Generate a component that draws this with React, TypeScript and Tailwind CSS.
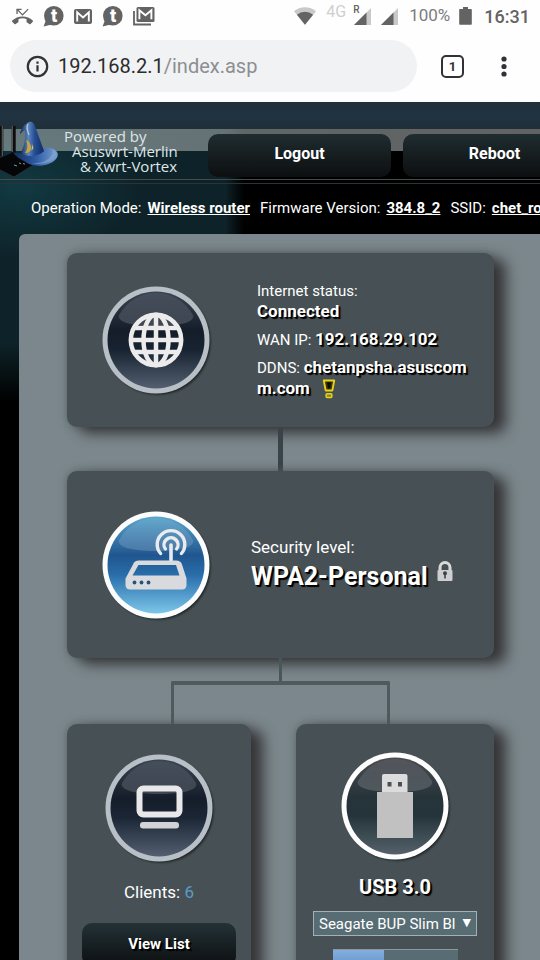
import React, { useState } from 'react';
import { MdPhoneMissed } from 'react-icons/md';

const GmailIcon: React.FC = () => (
  <svg width="18" height="15" viewBox="0 0 18 15">
    <rect width="18" height="15" rx="2" fill="#636363" />
    <path d="M3.2 12.5V3.4L9 8.4l5.8-5v9.1" fill="none" stroke="#fff" strokeWidth="1.9" />
  </svg>
);

const GmailStackIcon: React.FC = () => (
  <svg width="22" height="19" viewBox="0 0 22 19">
    <path d="M1 4v13.5h17" fill="none" stroke="#636363" strokeWidth="1.8" />
    <rect x="3.5" width="18" height="15" rx="1.5" fill="#636363" />
    <path d="M6.4 12.3V3.2l6 5 6-5v9.1" fill="none" stroke="#fff" strokeWidth="1.9" />
  </svg>
);

const ChatIcon: React.FC = () => (
  <svg width="21" height="21" viewBox="0 0 21 21">
    <circle cx="10.8" cy="9.8" r="9.8" fill="#636363" />
    <path d="M3 14L.6 20.4l7-1.6z" fill="#636363" />
    <text x="11" y="16" textAnchor="middle" fontFamily="Roboto, sans-serif" fontWeight="900" fontSize="18" fill="#fff">
      t
    </text>
  </svg>
);

const SignalIcon: React.FC = () => (
  <svg width="17" height="17" viewBox="0 0 17 17">
    <path d="M17 0v17H0z" fill="#c9c9c9" />
    <path d="M12.5 4.5V17H0z" fill="#636363" />
  </svg>
);

const StatusBar: React.FC = () => (
  <div className="flex h-8 items-center justify-between pr-[10px] pl-3">
    <div className="flex items-center gap-[10px]">
      <MdPhoneMissed className="size-[21px] text-[#636363]" />
      <ChatIcon />
      <GmailIcon />
      <ChatIcon />
      <GmailStackIcon />
    </div>
    <div className="flex items-center text-[#636363]">
      <svg className="mr-[10px]" width="22" height="18" viewBox="0 0 24 19">
        <path d="M12 19L0 4.2a19 19 0 0 1 24 0z" fill="#c9c9c9" />
        <path d="M12 19L3.2 8.1a14 14 0 0 1 17.600 0z" fill="#636363" />
      </svg>
      <span className="mr-2 mb-2 text-[16px] leading-4 text-[#cfcfcf]">4G</span>
      <span className="relative mr-[10px]">
        <SignalIcon />
        <span className="absolute -top-[3px] -left-px text-[10px] leading-[10px] font-medium">R</span>
      </span>
      <SignalIcon />
      <span className="ml-[11px] text-[17px] text-[#7c7c7c]">100%</span>
      <svg className="ml-[9px]" width="13" height="18" viewBox="0 0 13 18">
        <path d="M4 0h5v2h3a.8.8 0 0 1 .8.8V17a.8.8 0 0 1-.8.8H1a.8.8 0 0 1-.8-.8V2.800A.8.8 0 0 1 1 2h3z" fill="#636363" />
      </svg>
      <span className="ml-3 text-[18px] font-medium">16:31</span>
    </div>
  </div>
);

const AddressBar: React.FC = () => (
  <div className="flex h-[70px] items-start pt-2 pr-[25px] pl-[10px]">
    <div className="flex h-[52px] flex-1 items-center gap-[9px] rounded-full bg-[#f1f2f4] pl-4">
      <svg width="23" height="23" viewBox="0 0 23 23">
        <circle cx="11.500" cy="11.500" r="9.700" fill="none" stroke="#303235" strokeWidth="2.200" />
        <path d="M10.400 10.300h2.200v6.200h-2.200zM10.400 6.500h2.200v2.200h-2.200z" fill="#303235" />
      </svg>
      <span className="text-[20px] text-[#2b2c2e]">
        192.168.2.1<span className="text-[#8c8e91]">/index.asp</span>
      </span>
    </div>
    <button
      aria-label="Tabs"
      className="mt-[15px] ml-6 flex size-[23px] items-center justify-center rounded-[5px] border-2 border-[#303235] text-[13px] font-bold text-[#303235]"
    >
      1
    </button>
    <button aria-label="Menu" className="mt-[15px] ml-[29px] flex w-[22px] justify-center">
      <svg width="6" height="23" viewBox="0 0 6 23" fill="#303235">
        <circle cx="3" cy="4" r="2.600" />
        <circle cx="3" cy="11.500" r="2.600" />
        <circle cx="3" cy="19" r="2.600" />
      </svg>
    </button>
  </div>
);

const Logo: React.FC = () => (
  <svg width="60" height="60" viewBox="0 0 60 60" className="shrink-0">
    <defs>
      <linearGradient id="hat" x1="0" x2="1">
        <stop offset="0" stopColor="#14264f" />
        <stop offset=".35" stopColor="#5c86bd" />
        <stop offset=".6" stopColor="#274f93" />
        <stop offset="1" stopColor="#0e2a63" />
      </linearGradient>
      <linearGradient id="brim" x1="0" x2="1">
        <stop offset="0" stopColor="#152c5e" />
        <stop offset=".5" stopColor="#2c5aa3" />
        <stop offset="1" stopColor="#7ba1d0" />
      </linearGradient>
    </defs>
    <path d="M1.300 6v30M13.700 6v28" stroke="#0b0d0f" strokeWidth="4" />
    <path d="M2.300 6v30M12.300 6v26" stroke="#6f6663" strokeWidth="1" />
    <path d="M0 38l14-6 21 12-21 13L0 50z" fill="#050607" />
    <path d="M0 50l14 7 21-13" fill="none" stroke="#2b3034" strokeWidth="1" />
    <path d="M14 45l3 1M19 43l2 .6M23 43.500l2 .6" stroke="#7e95a0" strokeWidth="1" />
    <path d="M13 32c8 3 14 1 20 0s11-5 18-4c6 2 9 6 5 11-6 7-20 9-29 4-6-4-12-6-14-11z" fill="url(#brim)" />
    <path d="M52 29c6 3 5 8-1 12-6 3-14 4-20 2 9 1 16-2 19-6 3-3 3-5 2-8z" fill="#86a9d6" opacity=".6" />
    <path d="M20 14c1-6 5-10 9-12 3-.7 5 1 6 4l9 25c-4 5-16 7-23 2 3-7 5-14 4-22-1-1-2 0-5 3z" fill="url(#hat)" />
    <path d="M28 4c-2 3-1 6 1 11" stroke="#a9c2e3" strokeWidth="1.300" fill="none" />
    <path d="M26 20c3 1 5 4 5 8s-3 5-6 5c3-4 3-8 1-13z" fill="#c9a53c" />
    <path d="M32 24l1.500 4-2 3z" fill="#d8bd62" />
  </svg>
);

const NavButton: React.FC<{ label: string }> = ({ label }) => (
  <button className="h-[43px] w-[183px] shrink-0 rounded-[10px] bg-linear-to-b from-[#1f2d31] to-[#0d0f10] pb-1 text-[16px] font-bold text-white">
    {label}
  </button>
);

const Header: React.FC = () => (
  <header>
    <div className="h-[27px] bg-linear-to-b from-[#22303b] via-[#203341] to-[#203039]" />
    <div className="flex h-[51px] gap-3 border-b border-[#454b4d] bg-[linear-gradient(90deg,#a3b3b394,#8e8e90b0)] bg-[length:100%_22px] bg-no-repeat">
      <div className="flex w-[196px] shrink-0">
        <div className="-mt-[9px]">
          <Logo />
        </div>
        <div className="pl-1 font-['Open_Sans',sans-serif] text-[15px] leading-[15px] text-[#dfe6e8]">
          <p>Powered by</p>
          <p className="pl-2">Asuswrt-Merlin</p>
          <p className="pl-4">&amp; Xwrt-Vortex</p>
        </div>
      </div>
      <div className="flex gap-3 pt-[5px]">
        <NavButton label="Logout" />
        <NavButton label="Reboot" />
      </div>
    </div>
    <div className="h-1 border-b border-[#2c3335]" />
    <div className="flex h-[50px] gap-[10px] overflow-hidden pt-[14px] pl-[31px] text-[15px] leading-5 whitespace-nowrap text-white">
      <span>
        Operation Mode:<a href="#mode" className="ml-[6px] font-bold underline">Wireless router</a>
      </span>
      <span>
        Firmware Version:<a href="#firmware" className="ml-[6px] font-bold underline">384.8_2</a>
      </span>
      <span>
        SSID:<a href="#ssid" className="ml-[6px] font-bold underline">chet_router</a>
      </span>
    </div>
  </header>
);

interface OrbProps {
  id: string;
  ring: string;
  stops: [string, string, string, string];
  children: React.ReactNode;
}

// Glossy round badge behind every node icon
const Orb: React.FC<OrbProps> = ({ id, ring, stops, children }) => (
  <svg width="108" height="108" viewBox="0 0 108 108" className="shrink-0 overflow-visible">
    <defs>
      <linearGradient id={`${id}-fill`} x1="0" y1="0" x2="0" y2="1">
        <stop offset="0" stopColor={stops[0]} />
        <stop offset=".4" stopColor={stops[1]} />
        <stop offset=".6" stopColor={stops[2]} />
        <stop offset="1" stopColor={stops[3]} />
      </linearGradient>
      <linearGradient id={`${id}-gloss`} x1="0" y1="0" x2="0" y2="1">
        <stop offset="0" stopColor="#fff" stopOpacity=".06" />
        <stop offset="1" stopColor="#fff" stopOpacity=".17" />
      </linearGradient>
      <filter id={`${id}-blur`}>
        <feGaussianBlur stdDeviation="1.200" />
      </filter>
    </defs>
    <circle cx="56" cy="56" r="52.500" fill="#1b2124" filter={`url(#${id}-blur)`} />
    <circle cx="54" cy="54" r="53.500" fill={ring} />
    <circle cx="54" cy="54" r="48.500" fill={`url(#${id}-fill)`} />
    <path d="M17 29C26 14 39 7 54 7s28 7 37 22c2 7-12 11-37 11S15 36 17 29z" fill={`url(#${id}-gloss)`} />
    {children}
  </svg>
);

const GlobeOrb: React.FC = () => (
  <Orb id="globe" ring="#b9bfc6" stops={['#3a4452', '#141d29', '#182331', '#535e70']}>
    <g fill="none" stroke="#ececec" strokeWidth="4.500">
      <circle cx="54" cy="54" r="25.200" />
      <ellipse cx="54" cy="54" rx="12.500" ry="25.200" />
      <path d="M54 28v52M28 54h52M32 42h44M32 66h44" />
    </g>
  </Orb>
);

const RouterOrb: React.FC = () => (
  <Orb id="router" ring="#fbfcfd" stops={['#5ba5cc', '#20568f', '#286daa', '#7cc6ea']}>
    <g fill="none" stroke="#e9ecef" strokeLinecap="round">
      <path d="M69 34v18" strokeWidth="3.600" />
      <path d="M63.400 38a7 7 0 1 1 11.200 0" strokeWidth="3.400" />
      <path d="M58.600 42.500a13.800 13.800 0 1 1 20.800 0" strokeWidth="3.400" />
    </g>
    <path
      fillRule="evenodd"
      fill="#d9dadd"
      d="M37 49.500h37c3 0 5 1 6 4l4.500 14V74c0 3-2 4.500-4 4.500H28c-3 0-4.500-2-4.500-4.500v-6.500L31 53.500c1-3 3-4 6-4zM36.500 54L30.500 64.500H77.500L74 54z"
    />
    <g fill="#22547f">
      <circle cx="32.500" cy="71.500" r="1.900" />
      <circle cx="39.500" cy="71.500" r="1.900" />
      <circle cx="46.500" cy="71.500" r="1.900" />
    </g>
  </Orb>
);

const ClientOrb: React.FC = () => (
  <Orb id="client" ring="#b9bfc6" stops={['#3a4452', '#141d29', '#1b2635', '#535e70']}>
    <rect x="34.500" y="34.500" width="40" height="26" rx="4" fill="none" stroke="#e8e8ea" strokeWidth="6" />
    <rect x="35" y="68" width="39" height="6.500" rx="3" fill="#d3d3d5" />
  </Orb>
);

const UsbOrb: React.FC = () => (
  <Orb id="usb" ring="#fdfdfd" stops={['#494b51', '#26343a', '#25343b', '#54616a']}>
    <path d="M41 24a2 2 0 0 1 2-2h21.500a2 2 0 0 1 2 2v17H41z" fill="#dcdcdc" />
    <rect x="46.500" y="30" width="4" height="4.500" fill="#4b5054" />
    <rect x="57" y="30" width="4" height="4.500" fill="#4b5054" />
    <rect x="36" y="40" width="36" height="46" fill="#c1c1c1" />
  </Orb>
);

const LockIcon: React.FC = () => (
  <svg width="18" height="21" viewBox="0 0 18 21" className="mt-[2px]">
    <path d="M4 10V6.500a5 5 0 0 1 10 0V10" fill="none" stroke="#d9d9d9" strokeWidth="3" />
    <rect x="1.500" y="9" width="15" height="11" rx="1" fill="#cdcecf" />
    <circle cx="9" cy="12.300" r="2" fill="#3e4447" />
    <rect x="8.200" y="13" width="1.600" height="4.500" fill="#3e4447" />
  </svg>
);

const AlertIcon: React.FC = () => (
  <svg width="14" height="20" viewBox="0 0 14 21" className="ml-3 inline-block align-bottom">
    <path d="M1.500 1.500h11l-2 10.500h-7z" fill="#3a3208" stroke="#e6d416" strokeWidth="2" strokeLinejoin="round" />
    <path d="M5 3.500h4l-1 6.500h-2z" fill="#0d0d0d" />
    <rect x="4" y="15.500" width="6" height="4" rx="1" fill="#8f8420" stroke="#e6d416" strokeWidth="1.600" />
  </svg>
);

const cardClass = 'rounded-[10px] bg-[#475155] shadow-[12px_6px_14px_#363537,0_0_8px_#5b666a]';
const boldClass = 'font-bold [text-shadow:1px_1px_0_#000,2px_2px_1px_#000]';

const NetworkMap: React.FC = () => {
  const [device, setDevice] = useState('seagate');

  return (
    <main className="ml-[19px] flex-1 rounded-tl-[6px] bg-[#7b878c] pt-[19px] pr-[46px] pl-12">
      <section className={`flex h-[174px] items-center pr-4 pl-[35px] ${cardClass}`}>
        <GlobeOrb />
        <div className="ml-[47px] flex flex-1 flex-col gap-[7px] text-[15px] leading-5 break-all text-white">
          <p>
            Internet status:
            <br />
            <strong className={`text-[17px] ${boldClass}`}>Connected</strong>
          </p>
          <p>
            WAN IP: <strong className={`text-[17px] ${boldClass}`}>192.168.29.102</strong>
          </p>
          <p>
            DDNS: <strong className={`text-[17px] ${boldClass}`}>chetanpsha.asuscomm.com</strong>
            <AlertIcon />
          </p>
        </div>
      </section>

      <div className="mx-auto h-11 w-[5px] bg-[#3a4347]" />

      <section className={`flex h-[187px] items-center pl-[35px] ${cardClass}`}>
        <RouterOrb />
        <div className="ml-[41px] text-white">
          <p className="text-[17px] leading-6">Security level:</p>
          <div className="flex items-start gap-2">
            <strong className={`text-[25px] leading-9 ${boldClass}`}>WPA2-Personal</strong>
            <LockIcon />
          </div>
        </div>
      </section>

      <div className="mx-auto h-[23px] w-[3px] bg-[#4b565b]" />
      <div className="mx-[104px] h-[43px] rounded-t-[2px] border-x-[3px] border-t-4 border-[#4f5a5f]" />

      <div className="grid grid-cols-[184fr_198fr] gap-[45px]">
        <section className={`flex h-[300px] flex-col items-center px-[15px] pt-[30px] ${cardClass}`}>
          <ClientOrb />
          <p className="mt-[18px] text-[17px] leading-6 text-white">
            Clients: <span className="text-[#5b9bc9]">6</span>
          </p>
          <button
            className={`mt-[19px] h-[43px] w-full rounded-[10px] bg-linear-to-b from-[#233237] to-[#0d0f10] text-[15px] text-white ${boldClass}`}
          >
            View List
          </button>
        </section>

        <section className={`flex h-[300px] flex-col items-center px-[17px] pt-7 ${cardClass}`}>
          <UsbOrb />
          <p className={`mt-[15px] text-[20px] leading-6 text-white ${boldClass}`}>USB 3.0</p>
          <div className="relative mt-3 w-full">
            <select
              aria-label="USB device"
              value={device}
              onChange={(e) => setDevice(e.target.value)}
              className="h-[25px] w-full appearance-none border border-[#a3b0b4] bg-[#576d73] pl-[5px] text-[15px] leading-5 text-white"
            >
              <option value="seagate">Seagate BUP Slim Bl</option>
            </select>
            <span className="pointer-events-none absolute top-1 right-[6px] font-['DejaVu_Sans',sans-serif] text-[11px] leading-4 text-white">▼</span>
          </div>
          <div className="mt-[13px] h-[21px] w-[125px] border-t border-[#8a999e] bg-[#576d73]">
            <div className="h-full w-[41%] bg-linear-to-b from-[#86aede] to-[#5d8fc9]" />
          </div>
        </section>
      </div>
    </main>
  );
};

const App: React.FC = () => (
  <div className="flex h-screen flex-col overflow-hidden bg-white font-[Roboto,sans-serif]">
    <div className="shrink-0 bg-[#fefefe]">
      <StatusBar />
      <AddressBar />
    </div>
    <div className="flex flex-1 flex-col bg-black bg-[radial-gradient(ellipse_120px_70px_at_20px_85px,#14485399,transparent),linear-gradient(transparent_240px,#000_300px),linear-gradient(90deg,#0e2329_225px,#000_244px)]">
      <Header />
      <NetworkMap />
    </div>
  </div>
);

export default App;
